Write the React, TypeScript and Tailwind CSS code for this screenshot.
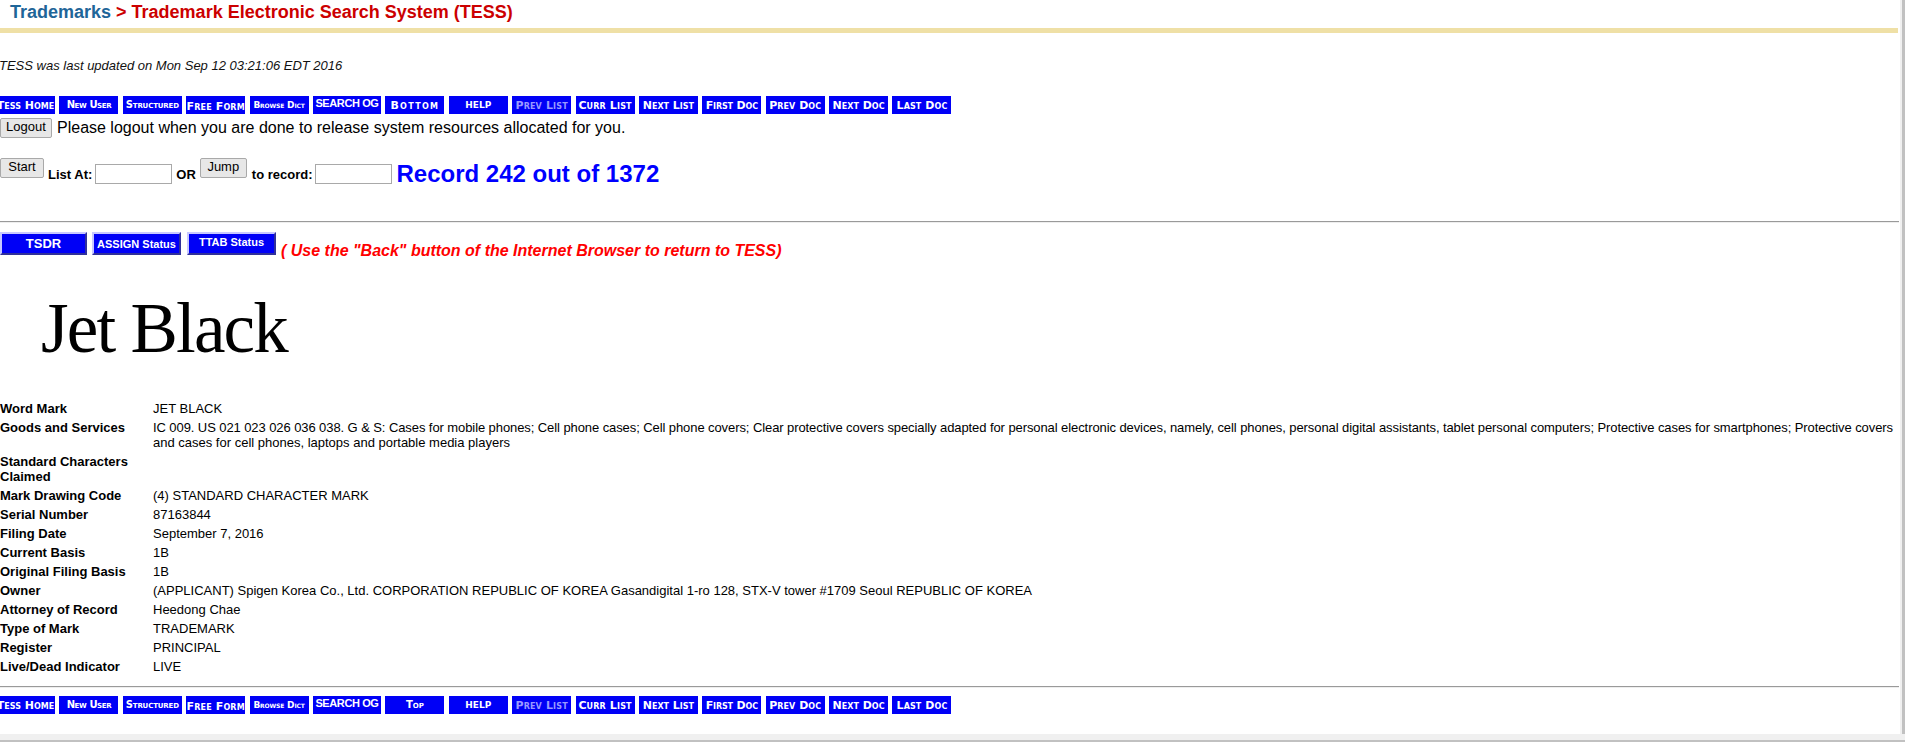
import React from "react";

type NavBtn = { label: string; w: string; cls: string; dim?: boolean };

const SC = "[font-variant:small-caps] font-['DejaVu_Sans',sans-serif]";

const topNav: NavBtn[] = [
  { label: "Tess Home", w: "w-[59px]", cls: `text-[11px] tracking-[0px] ${SC}` },
  { label: "New User", w: "w-[59px]", cls: `text-[10px] tracking-[-0.4px] ${SC}` },
  { label: "Structured", w: "w-[59px]", cls: `text-[10px] tracking-[-0.15px] ${SC}` },
  { label: "Free Form", w: "w-[59px]", cls: `text-[11px] tracking-[0.15px] pt-[2px] ${SC}` },
  { label: "Browse Dict", w: "w-[59px]", cls: `text-[9px] tracking-[-0.15px] ${SC}` },
  { label: "SEARCH OG", w: "w-[68px]", cls: "text-[11px] tracking-[-0.4px] pb-[3px] font-['Liberation_Sans',Arial,sans-serif]" },
  { label: "Bottom", w: "w-[59px]", cls: `text-[11px] tracking-[1.3px] ${SC}` },
  { label: "HELP", w: "w-[59px]", cls: "text-[9px] tracking-[0px] font-['DejaVu_Sans',sans-serif]" },
  { label: "Prev List", w: "w-[59px]", cls: `text-[11px] tracking-[0.15px] ${SC}`, dim: true },
  { label: "Curr List", w: "w-[59px]", cls: `text-[11px] tracking-[0.15px] ${SC}` },
  { label: "Next List", w: "w-[59px]", cls: `text-[11px] tracking-[0px] ${SC}` },
  { label: "First Doc", w: "w-[59px]", cls: `text-[11px] tracking-[-0.15px] ${SC}` },
  { label: "Prev Doc", w: "w-[59px]", cls: `text-[11px] tracking-[0.05px] ${SC}` },
  { label: "Next Doc", w: "w-[59px]", cls: `text-[11px] tracking-[0px] ${SC}` },
  { label: "Last Doc", w: "w-[59px]", cls: `text-[11px] tracking-[0.1px] ${SC}` },
];

const bottomNav: NavBtn[] = topNav.map((b) =>
  b.label === "Bottom"
    ? { label: "Top", w: "w-[59px]", cls: `text-[10px] tracking-[0px] ${SC}` }
    : b
);

function NavRow({ items }: { items: NavBtn[] }) {
  return (
    <div className="flex h-[18px] gap-[4.4px] ml-[-4px] font-bold">
      {items.map((b) => (
        <div
          key={b.label}
          className={`${b.w} h-[18px] shrink-0 flex items-center justify-center overflow-hidden whitespace-nowrap bg-[#0000f6] leading-none ${b.cls} ${
            b.dim ? "text-[#9a9aff]" : "text-white"
          }`}
        >
          {b.label}
        </div>
      ))}
    </div>
  );
}

function GrayButton({ label, w }: { label: string; w: string }) {
  return (
    <div
      className={`${w} h-[20px] shrink-0 flex items-center justify-center pb-[3px] border border-[#a9a9a9] rounded-[2px] bg-[#e7e7e7] text-[13px] text-black font-['Liberation_Sans',Arial,sans-serif]`}
    >
      {label}
    </div>
  );
}

const rows: { label: string; value: React.ReactNode }[] = [
  { label: "Word Mark", value: "JET BLACK" },
  {
    label: "Goods and Services",
    value: (
      <>
        <span className="whitespace-nowrap tracking-[-0.085px]">
          IC 009. US 021 023 026 036 038. G &amp; S: Cases for mobile phones; Cell phone cases; Cell phone covers; Clear protective covers specially adapted for personal electronic devices, namely, cell phones, personal digital assistants, tablet personal computers; Protective cases for smartphones; Protective covers
        </span>
        <br />
        and cases for cell phones, laptops and portable media players
      </>
    ),
  },
  { label: "Standard Characters Claimed", value: "" },
  { label: "Mark Drawing Code", value: "(4) STANDARD CHARACTER MARK" },
  { label: "Serial Number", value: "87163844" },
  { label: "Filing Date", value: "September 7, 2016" },
  { label: "Current Basis", value: "1B" },
  { label: "Original Filing Basis", value: "1B" },
  {
    label: "Owner",
    value:
      "(APPLICANT) Spigen Korea Co., Ltd. CORPORATION REPUBLIC OF KOREA Gasandigital 1-ro 128, STX-V tower #1709 Seoul REPUBLIC OF KOREA",
  },
  { label: "Attorney of Record", value: "Heedong Chae" },
  { label: "Type of Mark", value: "TRADEMARK" },
  { label: "Register", value: "PRINCIPAL" },
  { label: "Live/Dead Indicator", value: "LIVE" },
];

function Hr() {
  return <div className="h-[2px] w-[1899px] border-t border-t-[#9a9a9a] border-b border-b-[#eeeeee]" />;
}

export default function App() {
  return (
    <div className="w-[1905px] h-[742px] flex flex-col overflow-hidden bg-white font-['Liberation_Sans',Arial,sans-serif] text-black">
      <div className="flex h-[734px]">
        <div className="w-[1900px] overflow-hidden flex flex-col">
          {/* Title */}
          <div className="pt-[2px] pl-[10px] text-[18px] leading-[21px] font-bold whitespace-nowrap">
            <span className="text-[#1f6598]">Trademarks</span>
            <span className="text-[#cc0000]"> &gt; Trademark Electronic Search System (TESS)</span>
          </div>
          <div className="mt-[5px] h-[5px] w-[1898px] bg-[#efe0a6]" />

          <div className="mt-[25px] ml-[-1px] text-[13px] leading-[15px] italic text-[#111]">
            TESS was last updated on Mon Sep 12 03:21:06 EDT 2016
          </div>

          <div className="mt-[23px]">
            <NavRow items={topNav} />
          </div>

          {/* Logout */}
          <div className="mt-[4px] flex items-center h-[20px]">
            <GrayButton label="Logout" w="w-[52px]" />
            <span className="ml-[5px] text-[16px] leading-[18px] whitespace-nowrap">
              Please logout when you are done to release system resources allocated for you.
            </span>
          </div>

          {/* Start / Jump */}
          <div className="mt-[20px] flex items-start h-[30px] whitespace-nowrap">
            <GrayButton label="Start" w="w-[44px]" />
            <span className="ml-[4px] mt-[9px] text-[13px] leading-[15px] font-bold">List At:</span>
            <div className="ml-[3px] mt-[6px] w-[77px] h-[20px] border border-[#a9a9a9] bg-white" />
            <span className="ml-[4px] mt-[9px] text-[13px] leading-[15px] font-bold">OR</span>
            <div className="ml-[4px]">
              <GrayButton label="Jump" w="w-[47px]" />
            </div>
            <span className="ml-[5px] mt-[9px] text-[13px] leading-[15px] font-bold">to record:</span>
            <div className="ml-[3px] mt-[6px] w-[77px] h-[20px] border border-[#a9a9a9] bg-white" />
            <span className="ml-[4px] mt-[2px] text-[24px] leading-[28px] font-bold text-[#0000ff]">
              Record 242 out of 1372
            </span>
          </div>

          <div className="mt-[33px]">
            <Hr />
          </div>

          {/* TSDR row */}
          <div className="mt-[9px] flex items-start h-[23px] whitespace-nowrap">
            <div className="w-[87px] h-[23px] flex items-center justify-center bg-[#0000f6] border-2 border-t-[#c8c8ff] border-l-[#c8c8ff] border-b-[#30309a] border-r-[#30309a] text-white text-[13px] font-bold">
              TSDR
            </div>
            <div className="ml-[5px] w-[89px] h-[23px] flex items-center justify-center pt-[1px] bg-[#0000f6] border-2 border-t-[#c8c8ff] border-l-[#c8c8ff] border-b-[#30309a] border-r-[#30309a] text-white text-[11px] font-bold">
              ASSIGN Status
            </div>
            <div className="ml-[6px] w-[89px] h-[23px] flex items-center justify-center pb-[3px] bg-[#0000f6] border-2 border-t-[#c8c8ff] border-l-[#c8c8ff] border-b-[#30309a] border-r-[#30309a] text-white text-[11px] font-bold">
              TTAB Status
            </div>
            <span className="ml-[5px] mt-[10px] text-[16px] leading-[18px] font-bold italic text-[#ff0000]">
              ( Use the "Back" button of the Internet Browser to return to TESS)
            </span>
          </div>

          {/* Mark image text */}
          <div className="mt-[33px] pl-[41px] h-[80px] text-[71px] leading-[80px] tracking-[-1.8px] font-['Liberation_Serif','Times_New_Roman',serif] text-black whitespace-nowrap">
            Jet Black
          </div>

          {/* Data table */}
          <div className="mt-[31px] grid grid-cols-[153px_1fr] text-[13px] leading-[15px]">
            {rows.map((r) => (
              <React.Fragment key={r.label}>
                <div className="py-[2px] pr-[20px] font-bold">{r.label}</div>
                <div className="py-[2px]">{r.value}</div>
              </React.Fragment>
            ))}
          </div>

          <div className="mt-[10px]">
            <Hr />
          </div>

          <div className="mt-[8px]">
            <NavRow items={bottomNav} />
          </div>
        </div>
        <div className="w-[5px] flex">
          <div className="w-[2px] bg-[#f0f0f0]" />
          <div className="flex-1 bg-[#c1c1c1]" />
        </div>
      </div>
      <div className="h-[8px] flex flex-col">
        <div className="h-[6px] bg-[#f0f0f0]" />
        <div className="h-[2px] bg-[#c1c1c1]" />
      </div>
    </div>
  );
}
